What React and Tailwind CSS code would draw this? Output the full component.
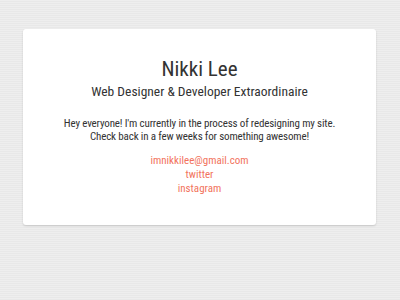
export default function App() {
  return (
    <div className="min-h-screen w-full bg-[repeating-linear-gradient(180deg,#eeeeee_0px,#eeeeee_1px,#e8e8e8_1px,#e8e8e8_2px)] pt-[29px] font-['Roboto_Condensed','Roboto',sans-serif]">
      <div className="ml-[23px] mr-[24px] h-[196px] rounded-[3px] bg-white pt-[28px] text-center text-[#333] shadow-[0_1px_2px_rgba(0,0,0,0.15)]">
        <h1 className="text-[21px] leading-[24px]">Nikki Lee</h1>
        <h2 className="mt-[3px] text-[13.5px] leading-[14px]">Web Designer &amp; Developer Extraordinaire</h2>
        <p className="mt-[19px] text-[11px] leading-[13px] tracking-[-0.15px]">
          Hey everyone! I'm currently in the process of redesigning my site.
          <br />
          Check back in a few weeks for something awesome!
        </p>
        <div className="mt-[11px] flex flex-col items-center text-[11px] leading-[14px] text-[#f2735d]">
          <a href="#">imnikkilee@gmail.com</a>
          <a href="#">twitter</a>
          <a href="#">instagram</a>
        </div>
      </div>
    </div>
  );
}
